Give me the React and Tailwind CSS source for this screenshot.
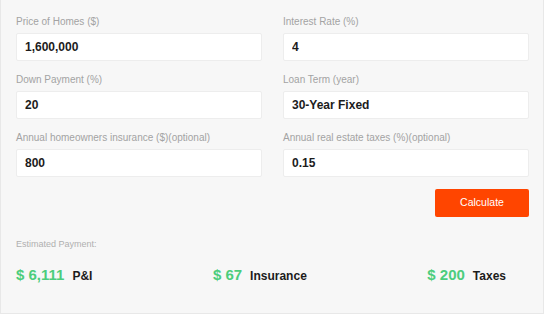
import React from "react";

const Field = ({ label, value }) => (
  <div className="flex flex-col">
    <label className="text-[10px] leading-[12px] text-[#a3a3a3] mb-[5px]">{label}</label>
    <input
      readOnly
      value={value}
      className="h-[28px] w-full bg-white border border-[#ededed] rounded-[2px] px-2 text-[12px] font-bold text-[#1c1c1c] outline-none"
    />
  </div>
);

const Result = ({ amount, label }) => (
  <div className="flex items-baseline gap-[8px]">
    <span className="text-[15px] leading-[18px] font-semibold text-[#4ccd7c]">{amount}</span>
    <span className="text-[12px] font-bold text-[#1c1c1c]">{label}</span>
  </div>
);

const App = () => {
  return (
    <div
      className="w-[546px] h-[315px] bg-white"
      style={{ fontFamily: '"Liberation Sans", Arial, sans-serif' }}
    >
      <div className="w-[544px] h-[314px] bg-[#f7f7f7] border-l border-r border-b border-[#e8e8e8] pt-[16px] pl-[15px] pr-[14px]">
        <div className="grid grid-cols-2 gap-x-[21px] gap-y-[13px]">
          <Field label="Price of Homes ($)" value="1,600,000" />
          <Field label="Interest Rate (%)" value="4" />
          <Field label="Down Payment (%)" value="20" />
          <Field label="Loan Term (year)" value="30-Year Fixed" />
          <Field label="Annual homeowners insurance ($)(optional)" value="800" />
          <Field label="Annual real estate taxes (%)(optional)" value="0.15" />
        </div>
        <div className="flex justify-end mt-[12px]">
          <button className="w-[94px] h-[28px] bg-[#ff4500] text-white text-[10.5px] rounded-[2px]">
            Calculate
          </button>
        </div>
        <div className="mt-[22px] text-[9px] leading-[11px] text-[#b0b0b0]">Estimated Payment:</div>
        <div className="mt-[16px] flex justify-between items-baseline pr-[23px]">
          <Result amount="$ 6,111" label="P&I" />
          <Result amount="$ 67" label="Insurance" />
          <Result amount="$ 200" label="Taxes" />
        </div>
      </div>
    </div>
  );
};

export default App;
